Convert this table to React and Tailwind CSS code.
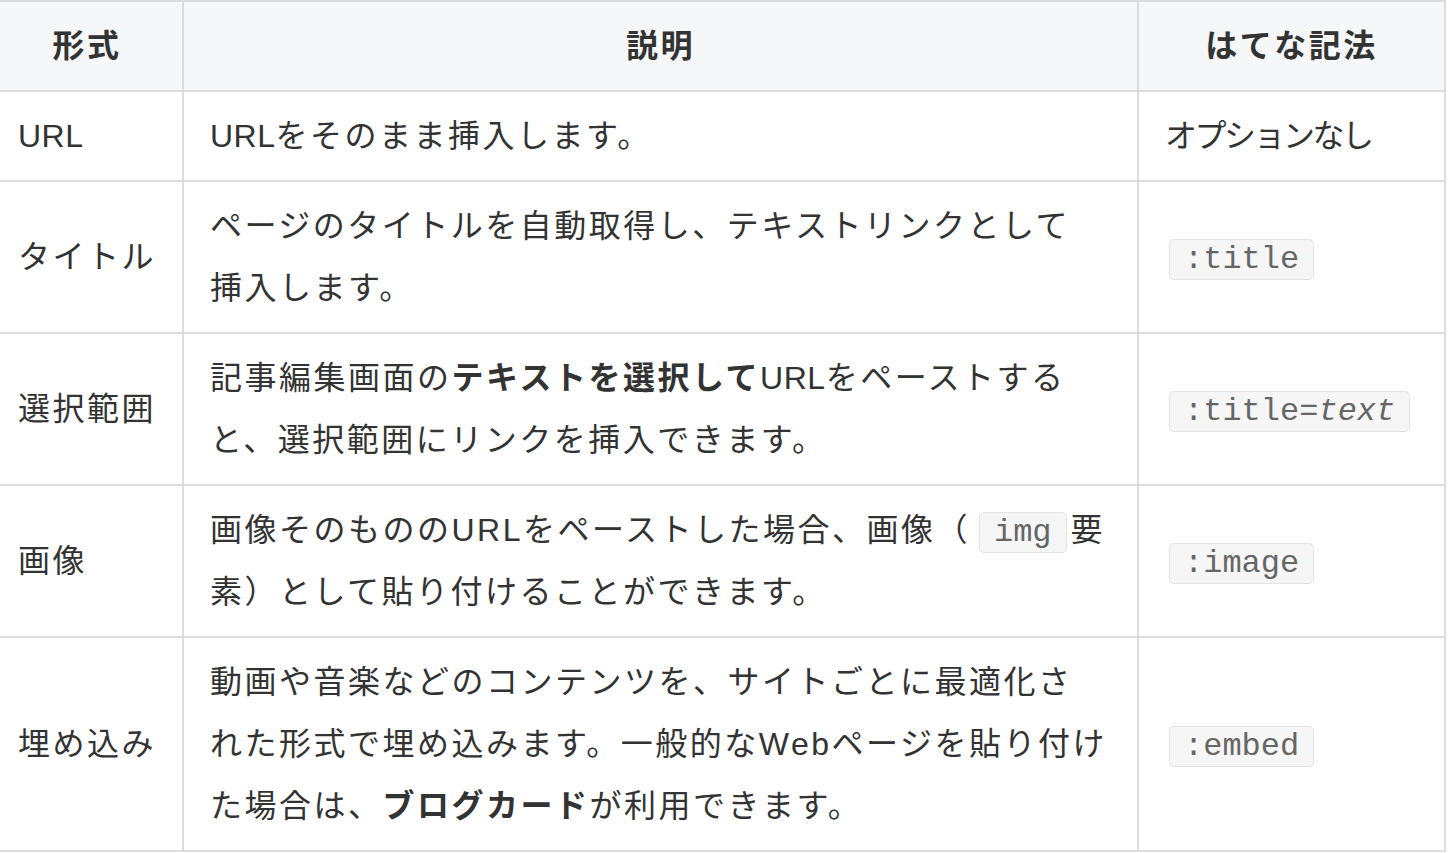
import React from 'react';

const FONT = { fontFamily: '"Liberation Sans", "Noto Sans CJK JP", sans-serif' };

function Code({ children, className = '' }) {
  return (
    <code
      className={`inline-block rounded-[5px] border border-[#e3e3e3] bg-[#f6f6f6] px-[14px] py-[1px] align-middle font-['Liberation_Mono',monospace] text-[32px] leading-[37px] tracking-normal text-[#666] ${className}`}
    >
      {children}
    </code>
  );
}

// latin words look tighter than the kana around them
const L = ({ children }) => <span className="tracking-[0.5px]">{children}</span>;

const rows = [
  {
    name: <L>URL</L>,
    key: 'url',
    desc: (
      <>
        <L>URL</L>をそのまま挿入します。
      </>
    ),
    notation: <span className="tracking-[-2.5px]">オプションなし</span>,
  },
  {
    name: 'タイトル',
    key: 'title',
    desc: (
      <>
        ページのタイトルを自動取得し、テキストリンクとして
        <br />
        挿入します。
      </>
    ),
    notation: <Code className="ml-[4px]">:title</Code>,
  },
  {
    name: '選択範囲',
    key: 'range',
    desc: (
      <>
        記事編集画面の<strong className="font-bold">テキストを選択して</strong>
        <L>URL</L>をペーストする
        <br />
        と、選択範囲にリンクを挿入できます。
      </>
    ),
    notation: (
      <Code className="ml-[4px]">
        :title=<var className="italic">text</var>
      </Code>
    ),
  },
  {
    name: '画像',
    key: 'image',
    desc: (
      <>
        画像そのもののURLをペーストした場合、画像（<Code className="ml-[9px] mr-[4px]">img</Code>要
        <br />
        素）として貼り付けることができます。
      </>
    ),
    notation: <Code className="ml-[4px]">:image</Code>,
  },
  {
    name: '埋め込み',
    key: 'embed',
    desc: (
      <>
        動画や音楽などのコンテンツを、サイトごとに最適化さ
        <br />
        れた形式で埋め込みます。一般的なWebページを貼り付け
        <br />
        た場合は、<strong className="font-bold">ブログカード</strong>が利用できます。
      </>
    ),
    notation: <Code className="ml-[4px]">:embed</Code>,
  },
];

export default function App() {
  const cell = 'border-2 border-[#dcdcdc] px-[26px] py-[13px] align-middle leading-[62px]';
  return (
    <div className="min-h-screen overflow-hidden bg-white" style={FONT}>
      <table className="ml-[-10px] w-[1454px] table-fixed border-collapse text-[32px] tracking-[2.5px] text-[#333]">
        <colgroup>
          <col className="w-[192px]" />
          <col className="w-[955px]" />
          <col className="w-[307px]" />
        </colgroup>
        <thead>
          <tr className="bg-[#f6f7f9]">
            <th className={`${cell} text-center font-bold`}>形式</th>
            <th className={`${cell} text-center font-bold`}>説明</th>
            <th className={`${cell} text-center font-bold`}>はてな記法</th>
          </tr>
        </thead>
        <tbody>
          {rows.map((r) => (
            <tr key={r.key}>
              <td className={`${cell} text-left`}>{r.name}</td>
              <td className={`${cell} whitespace-nowrap text-left`}>{r.desc}</td>
              <td className={`${cell} text-left`}>{r.notation}</td>
            </tr>
          ))}
        </tbody>
      </table>
    </div>
  );
}
